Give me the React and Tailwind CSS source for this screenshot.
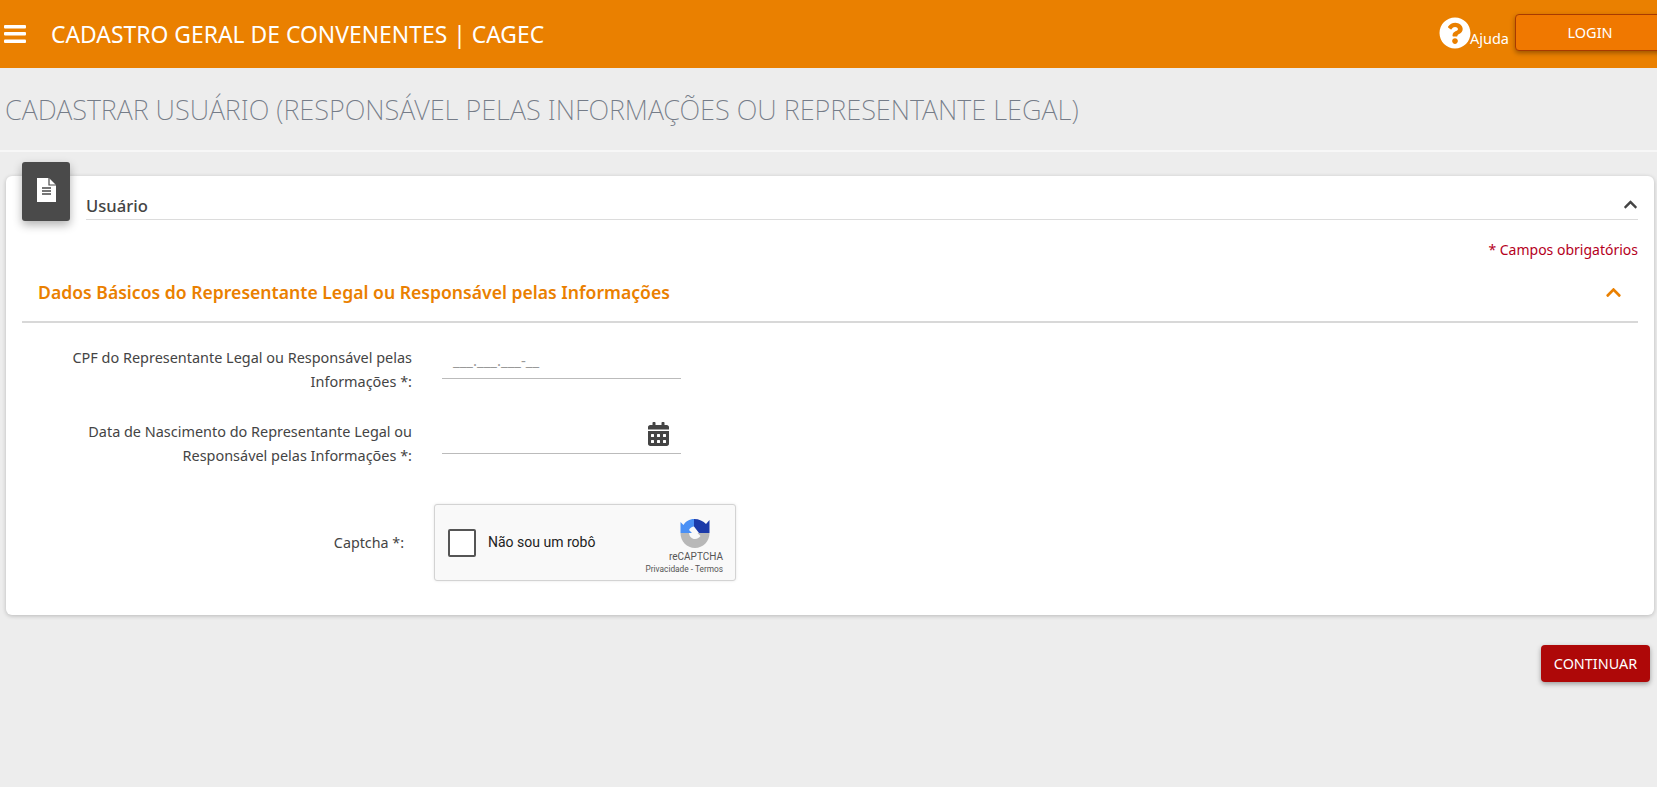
import React from "react";
import { FaQuestionCircle, FaCalendarAlt, FaChevronUp } from "react-icons/fa";

const font = "font-['Noto_Sans','Open_Sans',sans-serif]";

const MenuIcon = () => (
  <svg width="22" height="18" viewBox="0 0 22 18" fill="#fff">
    <rect x="0" y="0" width="22" height="3.500" rx="1" />
    <rect x="0" y="7" width="22" height="3.500" rx="1" />
    <rect x="0" y="14.500" width="22" height="3.500" rx="1" />
  </svg>
);

const FileIcon = () => (
  <svg width="19" height="24" viewBox="0 0 19 24">
    <path d="M0 0H12L19 7V24H0Z" fill="#fff" />
    <path d="M12 0V7H19" fill="none" stroke="#4a4a4a" strokeWidth="1.200" />
    <path d="M5 10H14M5 13H14M5 16H14" stroke="#4a4a4a" strokeWidth="1.300" />
  </svg>
);

const RecaptchaLogo = () => (
  <svg width="30" height="30" viewBox="0 0 30 30">
    <path d="M14 1C9.500 1 5.500 3.500 3.500 7L0.500 4V15H12L9 12C10 10 12 8.500 14 8.500Z" fill="#4a90f5" />
    <path d="M14 1C19 1 23.500 3 26 6L29.500 2V15H19L14 8.500Z" fill="#1c3aa9" />
    <path d="M0.500 15H9C9.500 18.500 11.500 21 15 21C17.500 21 19.500 19.500 20.500 18L17.500 15H29.500C29.500 23.500 23 30 15 30C7 30 0.500 23.500 0.500 15Z" fill="#b8b8b8" />
  </svg>
);

export default function App() {
  return (
    <div className={`min-h-[787px] bg-[#ededed] ${font}`}>
      <header className="h-[68px] bg-[#ea8000] flex items-center text-white">
        <div className="ml-[4px] mb-[1px] flex">
          <MenuIcon />
        </div>
        <h1 className="ml-[25px] mt-[2px] text-[22.9px] leading-none">CADASTRO GERAL DE CONVENENTES | CAGEC</h1>
        <div className="ml-auto flex items-center">
          <FaQuestionCircle className="w-[32px] h-[32px] mb-[2px]" />
          <span className="text-[14.5px] mt-[10px] ml-[-1px]">Ajuda</span>
          <button className="ml-[6px] w-[150px] h-[37px] -mr-[8px] mb-[4px] pt-[1px] rounded-[4px] bg-[#f07800] border border-[#a83a00] text-[14.500px] shadow-[0_2px_5px_rgba(0,0,0,0.35)]">
            LOGIN
          </button>
        </div>
      </header>

      <div className="h-[84px] border-b-2 border-[#f7f7f7] pl-[5px] flex items-center">
        <h2 className="mt-[2px] text-[27.1px] leading-none font-extralight text-[#757c88]">
          CADASTRAR USUÁRIO (RESPONSÁVEL PELAS INFORMAÇÕES OU REPRESENTANTE LEGAL)
        </h2>
      </div>

      <section className="relative ml-[6px] mr-[3px] mt-[24px] h-[439px] bg-white rounded-[6px] shadow-[0_1px_4px_rgba(0,0,0,0.22)] px-[16px]">
        <div className="absolute left-[16px] top-[-14px] w-[48px] h-[59px] rounded-[3px] bg-[#4a4a4a] flex justify-center pt-[16px] shadow-[0_4px_10px_rgba(0,0,0,0.3)]">
          <FileIcon />
        </div>

        <div className="ml-[64px] h-[44px] border-b border-[#dcdcdc] flex items-end justify-between">
          <span className="text-[16.6px] font-medium text-[#444]">Usuário</span>
          <FaChevronUp className="w-[15px] h-[15px] text-[#444] mb-[7px]" />
        </div>

        <p className="mt-[20px] text-right text-[14px] leading-[20px] text-[#b5001c]">* Campos obrigatórios</p>

        <div className="mt-[12px] h-[51px] border-b-2 border-[#d8d8d8] flex items-center justify-between pl-[16px] pr-[16px] pb-[9px]">
          <span className="text-[17.6px] font-semibold text-[#ea8000]">
            Dados Básicos do Representante Legal ou Responsável pelas Informações
          </span>
          <FaChevronUp className="w-[17px] h-[17px] text-[#ea8000]" />
        </div>

        <div className="mt-[23px] flex">
          <label className="w-[390px] text-right text-[14.45px] leading-[24px] text-[#444]">
            CPF do Representante Legal ou Responsável pelas Informações *:
          </label>
          <div className="ml-[30px] w-[239px] h-[33px] border-b border-[#bbb] pl-[11px] pt-[3px] text-[15px] text-[#999]">
            ___.___.___-__
          </div>
        </div>

        <div className="mt-[26px] flex">
          <label className="w-[390px] text-right text-[14.45px] leading-[24px] text-[#444]">
            Data de Nascimento do Representante Legal ou Responsável pelas Informações *:
          </label>
          <div className="ml-[30px] w-[239px] h-[34px] border-b border-[#bbb] flex justify-end pr-[12px]">
            <FaCalendarAlt className="w-[21px] h-[24px] text-[#444] mt-[2px]" />
          </div>
        </div>

        <div className="mt-[36px] flex items-center">
          <label className="w-[388px] text-right text-[14.3px] text-[#444] pr-[6px]">Captcha *:</label>
          <div className="ml-[24px] w-[302px] h-[77px] rounded-[3px] border border-[#d3d3d3] bg-[#f9f9f9] shadow-[0_0_3px_rgba(0,0,0,0.1)] flex items-center pl-[13px] font-['Roboto',sans-serif]">
            <div className="w-[28px] h-[28px] rounded-[2px] border-2 border-[#555] bg-white" />
            <span className="ml-[12px] text-[14px] text-[#222]">Não sou um robô</span>
            <div className="ml-auto mr-[12px] mt-[7px] flex flex-col items-end text-[#555]">
              <div className="mr-[13px] flex">
                <RecaptchaLogo />
              </div>
              <span className="text-[10px] leading-[12px] mt-[3px]">reCAPTCHA</span>
              <span className="text-[8.3px] leading-[12px]">Privacidade - Termos</span>
            </div>
          </div>
        </div>
      </section>

      <div className="mt-[30px] flex justify-end pr-[7px]">
        <button className="w-[109px] h-[37px] rounded-[4px] bg-[#ae0808] text-white text-[14.4px] shadow-[0_2px_5px_rgba(0,0,0,0.35)]">
          CONTINUAR
        </button>
      </div>
    </div>
  );
}
